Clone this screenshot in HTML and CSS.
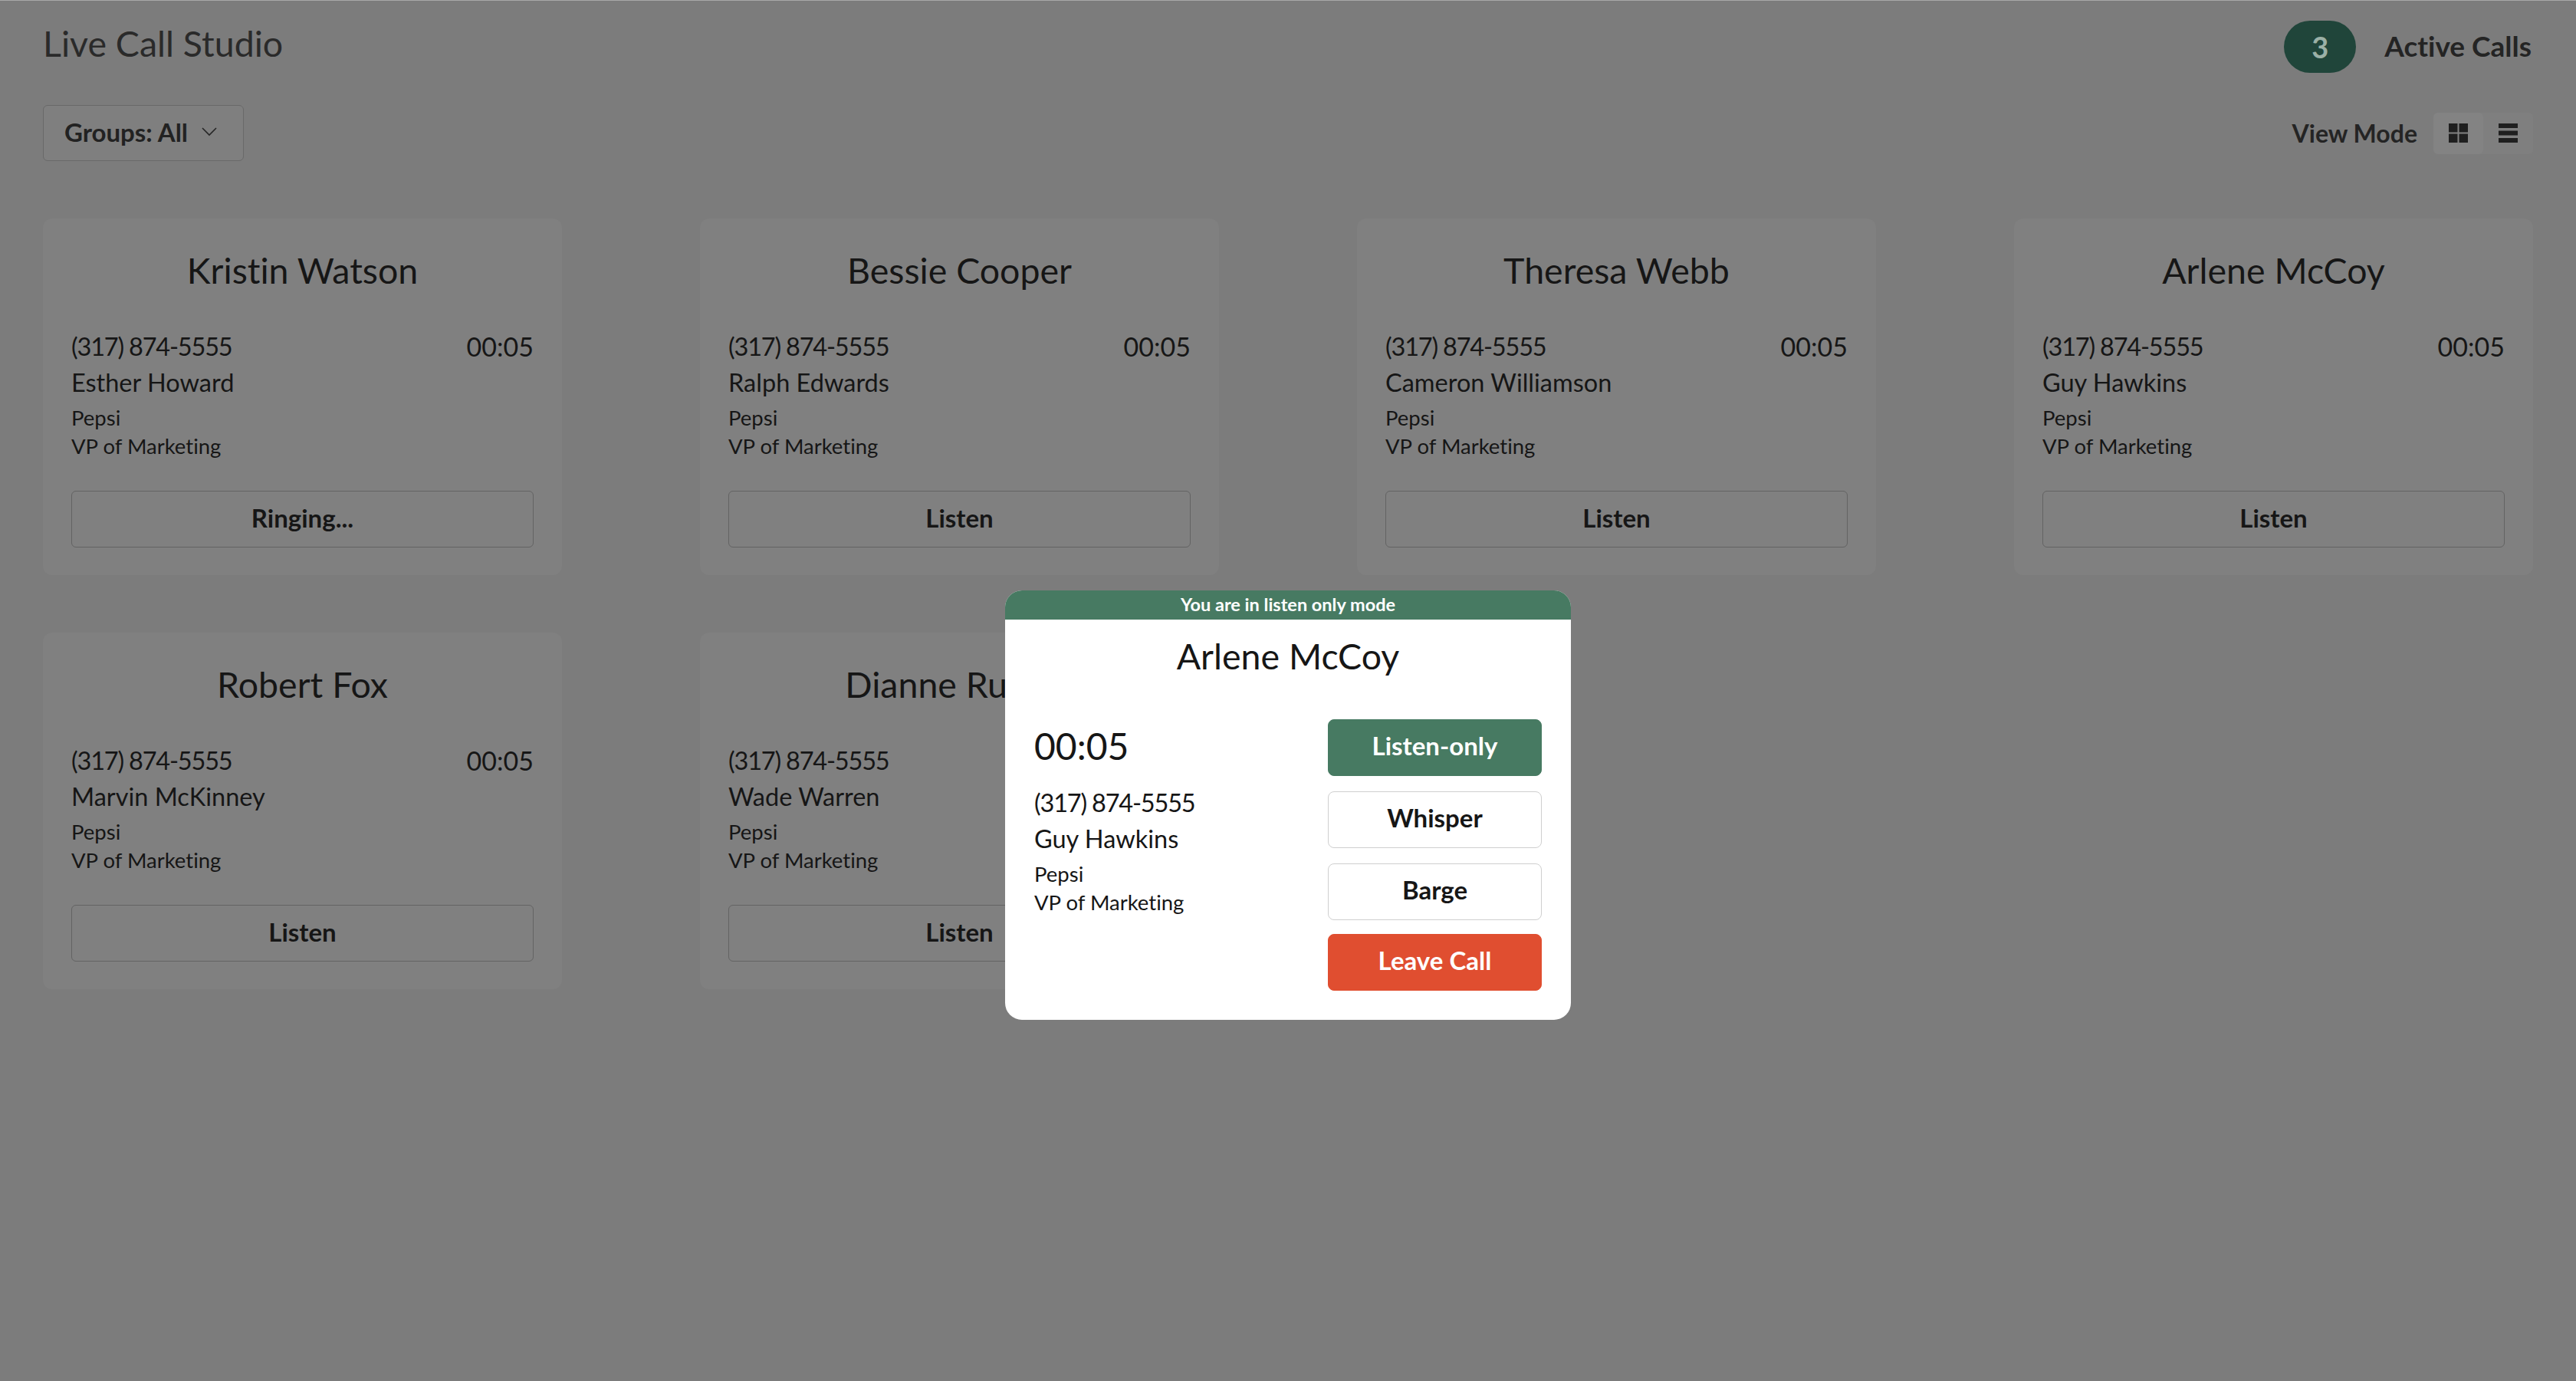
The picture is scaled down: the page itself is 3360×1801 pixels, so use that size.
FILE: index.html
```html
<!DOCTYPE html>
<html lang="en">
<head>
  <meta charset="UTF-8"/>
  <title>Live Call Studio</title>
  <link rel="stylesheet" href="styles.css">
</head>
<body>
  <header class="top-row">
    <h1>Live Call Studio</h1>
    <div class="active-calls">
      <span class="badge">3</span>
      <span class="active-label">Active Calls</span>
    </div>
  </header>
  <div class="tool-row">
    <button class="groups-btn">Groups: All
      <svg class="chevron" viewBox="0 0 20 12"><path d="M1 1l9 9 9-9" fill="none" stroke="#262626" stroke-width="1.6"/></svg>
    </button>
    <div class="view-mode">
      <span class="view-label">View Mode</span>
      <div class="view-toggle">
        <span class="view-btn active">
          <svg viewBox="0 0 25 25"><path d="M0 0h11.5v11.5H0zM13.5 0H25v11.5H13.5zM0 13.5h11.5V25H0zM13.5 13.5H25V25H13.5z" fill="#1f1f1f"/></svg>
        </span>
        <span class="view-btn">
          <svg viewBox="0 0 25 25"><path d="M0 0h25v6H0zM0 9.5h25v6H0zM0 19h25v6H0z" fill="#1f1f1f"/></svg>
        </span>
      </div>
    </div>
  </div>

  <main class="call-grid">
    <section class="call-card">
      <h2>Kristin Watson</h2>
      <div class="call-line"><span class="phone">(317) 874-5555</span><span class="timer">00:05</span></div>
      <div class="call-line">Esther Howard</div>
      <div class="call-meta">Pepsi<br>VP of Marketing</div>
      <button class="listen-btn">Ringing...</button>
    </section>
    <section class="call-card">
      <h2>Bessie Cooper</h2>
      <div class="call-line"><span class="phone">(317) 874-5555</span><span class="timer">00:05</span></div>
      <div class="call-line">Ralph Edwards</div>
      <div class="call-meta">Pepsi<br>VP of Marketing</div>
      <button class="listen-btn">Listen</button>
    </section>
    <section class="call-card">
      <h2>Theresa Webb</h2>
      <div class="call-line"><span class="phone">(317) 874-5555</span><span class="timer">00:05</span></div>
      <div class="call-line">Cameron Williamson</div>
      <div class="call-meta">Pepsi<br>VP of Marketing</div>
      <button class="listen-btn">Listen</button>
    </section>
    <section class="call-card">
      <h2>Arlene McCoy</h2>
      <div class="call-line"><span class="phone">(317) 874-5555</span><span class="timer">00:05</span></div>
      <div class="call-line">Guy Hawkins</div>
      <div class="call-meta">Pepsi<br>VP of Marketing</div>
      <button class="listen-btn">Listen</button>
    </section>
    <section class="call-card">
      <h2>Robert Fox</h2>
      <div class="call-line"><span class="phone">(317) 874-5555</span><span class="timer">00:05</span></div>
      <div class="call-line">Marvin McKinney</div>
      <div class="call-meta">Pepsi<br>VP of Marketing</div>
      <button class="listen-btn">Listen</button>
    </section>
    <section class="call-card">
      <h2>Dianne Russell</h2>
      <div class="call-line"><span class="phone">(317) 874-5555</span><span class="timer">00:05</span></div>
      <div class="call-line">Wade Warren</div>
      <div class="call-meta">Pepsi<br>VP of Marketing</div>
      <button class="listen-btn">Listen</button>
    </section>
  </main>

  <div class="modal">
    <div class="modal-banner">You are in listen only mode</div>
    <h2 class="modal-name">Arlene McCoy</h2>
    <div class="modal-body">
      <div class="modal-info">
        <div class="modal-timer">00:05</div>
        <div class="call-line"><span class="phone">(317) 874-5555</span></div>
        <div class="call-line">Guy Hawkins</div>
        <div class="call-meta">Pepsi<br>VP of Marketing</div>
      </div>
      <div class="modal-actions">
        <button class="action-btn green">Listen-only</button>
        <button class="action-btn">Whisper</button>
        <button class="action-btn">Barge</button>
        <button class="action-btn red">Leave Call</button>
      </div>
    </div>
  </div>
</body>
</html>
```

FILE: styles.css
```css
* {
  margin: 0;
  padding: 0;
  box-sizing: border-box;
}
body {
  min-height: 100vh;
  background: #7c7c7c;
  border-top: 1px solid #a8a8a8;
  font-family: 'Lato', sans-serif;
  font-variant-ligatures: none;
  color: #161616;
  padding: 0 56px;
  position: relative;
}
button {
  font-family: inherit;
  font-variant-ligatures: none;
  cursor: pointer;
}
.top-row {
  display: flex;
  justify-content: space-between;
  align-items: center;
  height: 100px;
  padding-top: 20px;
}
h1 {
  font-size: 46.5px;
  font-weight: 400;
  color: #2a2a2a;
  margin-top: -10px;
}
.active-calls {
  display: flex;
  align-items: center;
  gap: 37px;
}
.badge {
  width: 94px;
  height: 68px;
  border-radius: 34px;
  background: #20453a;
  color: #9bb0a6;
  font-size: 38px;
  font-weight: 700;
  display: flex;
  align-items: center;
  justify-content: center;
}
.active-label {
  font-size: 37px;
  font-weight: 700;
  color: #242424;
  margin: -4px 2px 0 0;
}
.tool-row {
  display: flex;
  justify-content: space-between;
  align-items: center;
  margin-top: 36px;
  height: 73px;
}
.groups-btn {
  width: 262px;
  height: 73px;
  display: flex;
  align-items: center;
  gap: 18px;
  padding: 0 0 3px 27px;
  background: #7f7f7f;
  border: 1px solid #696969;
  border-radius: 6px;
  font-size: 33px;
  font-weight: 700;
  color: #222;
}
.chevron {
  width: 20px;
  height: 12px;
}
.view-mode {
  display: flex;
  align-items: center;
  gap: 21px;
}
.view-label {
  font-size: 32px;
  font-weight: 700;
  color: #242424;
}
.view-toggle {
  display: flex;
  border-radius: 6px;
  background: #7f7f7f;
}
.view-btn {
  width: 65px;
  height: 54px;
  display: flex;
  align-items: center;
  justify-content: center;
  border-radius: 6px;
}
.view-btn.active {
  background: #838383;
}
.view-btn svg {
  width: 25px;
  height: 25px;
}
.call-grid {
  display: grid;
  grid-template-columns: repeat(4, 677px);
  justify-content: space-between;
  row-gap: 75px;
  margin-top: 75px;
}
.call-card {
  background: #808080;
  border-radius: 12px;
  padding: 37px 37px 36px;
  height: 465px;
}
.call-card h2,
.modal-name {
  font-size: 46.5px;
  font-weight: 400;
  line-height: 60px;
  text-align: center;
  margin-bottom: 46px;
}
.call-line {
  display: flex;
  justify-content: space-between;
  font-size: 32.5px;
  line-height: 47px;
}
.phone {
  letter-spacing: -1.2px;
}
.timer {
  font-size: 34px;
}
.call-meta {
  font-size: 27.5px;
  line-height: 37px;
  margin-top: 4px;
}
.listen-btn {
  display: block;
  width: 100%;
  height: 74px;
  margin-top: 40px;
  padding-bottom: 5px;
  background: transparent;
  border: 1px solid #636363;
  border-radius: 6px;
  font-size: 33px;
  font-weight: 700;
  color: #161616;
}
.modal {
  position: absolute;
  left: 1311px;
  top: 769px;
  width: 738px;
  height: 560px;
  background: #fff;
  border-radius: 22px;
  overflow: hidden;
}
.modal-banner {
  height: 38px;
  background: #477a62;
  color: #fff;
  font-size: 23.5px;
  font-weight: 700;
  line-height: 36px;
  text-align: center;
}
.modal-name {
  margin: 17px 0 0;
}
.modal-body {
  display: flex;
  justify-content: space-between;
  padding: 53px 38px 0;
}
.modal-timer {
  font-size: 48px;
  line-height: 60px;
  margin: 5px 0 20px;
}
.modal-actions {
  width: 279px;
  display: flex;
  flex-direction: column;
  gap: 20px;
}
.action-btn {
  height: 74px;
  padding-bottom: 6px;
  background: #fff;
  border: 1px solid #cfcfcf;
  border-radius: 8px;
  font-size: 33px;
  font-weight: 700;
  color: #161616;
}
.action-btn.green {
  background: #477a62;
  border-color: #477a62;
  color: #fff;
}
.action-btn.red {
  margin-top: -2px;
  background: #e04e30;
  border-color: #e04e30;
  color: #fff;
}
```
